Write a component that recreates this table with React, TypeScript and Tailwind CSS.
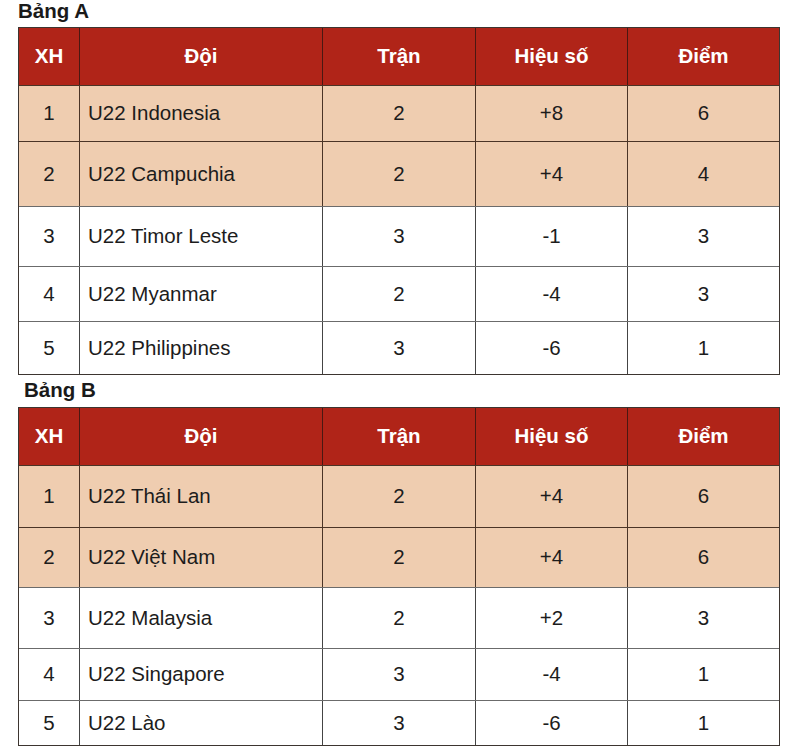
const headers = ["XH", "Đội", "Trận", "Hiệu số", "Điểm"];

type Row = { rank: string; team: string; played: string; diff: string; pts: string; h: string; top?: boolean };

const groupA: Row[] = [
  { rank: "1", team: "U22 Indonesia", played: "2", diff: "+8", pts: "6", h: "h-[56px]", top: true },
  { rank: "2", team: "U22 Campuchia", played: "2", diff: "+4", pts: "4", h: "h-[65px]", top: true },
  { rank: "3", team: "U22 Timor Leste", played: "3", diff: "-1", pts: "3", h: "h-[60px]" },
  { rank: "4", team: "U22 Myanmar", played: "2", diff: "-4", pts: "3", h: "h-[55px]" },
  { rank: "5", team: "U22 Philippines", played: "3", diff: "-6", pts: "1", h: "h-[53px]" },
];

const groupB: Row[] = [
  { rank: "1", team: "U22 Thái Lan", played: "2", diff: "+4", pts: "6", h: "h-[62px]", top: true },
  { rank: "2", team: "U22 Việt Nam", played: "2", diff: "+4", pts: "6", h: "h-[60px]", top: true },
  { rank: "3", team: "U22 Malaysia", played: "2", diff: "+2", pts: "3", h: "h-[61px]" },
  { rank: "4", team: "U22 Singapore", played: "3", diff: "-4", pts: "1", h: "h-[52px]" },
  { rank: "5", team: "U22 Lào", played: "3", diff: "-6", pts: "1", h: "h-[45px]" },
];

const cols = "grid grid-cols-[60px_243px_153px_152px_1fr]";

function Standings({ rows }: { rows: Row[] }) {
  return (
    <div className="w-[762px] border border-[#3d3530]">
      <div className={`${cols} h-[57px] bg-[#b02418] text-white font-bold`}>
        {headers.map((h, i) => (
          <div
            key={h}
            className={`flex items-center justify-center ${i > 0 ? "border-l border-[#4a1812]" : ""}`}
          >
            {h}
          </div>
        ))}
      </div>
      {rows.map((r) => {
        const line = r.top ? "border-[#4a3426]" : "border-[#6b6b6b]";
        const vline = r.top ? "border-[#4a3426]" : "border-[#444]";
        return (
          <div
            key={r.rank}
            className={`${cols} ${r.h} border-t ${line} ${r.top ? "bg-[#efcdb0]" : "bg-white"} text-[#1c1c1c]`}
          >
            <div className="flex items-center justify-center">{r.rank}</div>
            <div className={`flex items-center pl-[8px] border-l ${vline}`}>{r.team}</div>
            <div className={`flex items-center justify-center border-l ${vline}`}>{r.played}</div>
            <div className={`flex items-center justify-center border-l ${vline}`}>{r.diff}</div>
            <div className={`flex items-center justify-center border-l ${vline}`}>{r.pts}</div>
          </div>
        );
      })}
    </div>
  );
}

export default function App() {
  return (
    <div className="w-[800px] h-[752px] bg-white pl-[18px] font-['Liberation_Sans',Arial,sans-serif] text-[20.5px]">
      <h2 className="h-[27px] text-[20.5px] font-bold leading-[22px] text-[#1a1a1a]">Bảng A</h2>
      <Standings rows={groupA} />
      <h2 className="h-[32px] pl-[6px] pt-[3px] text-[20.5px] font-bold leading-[24px] text-[#1a1a1a]">Bảng B</h2>
      <Standings rows={groupB} />
    </div>
  );
}
